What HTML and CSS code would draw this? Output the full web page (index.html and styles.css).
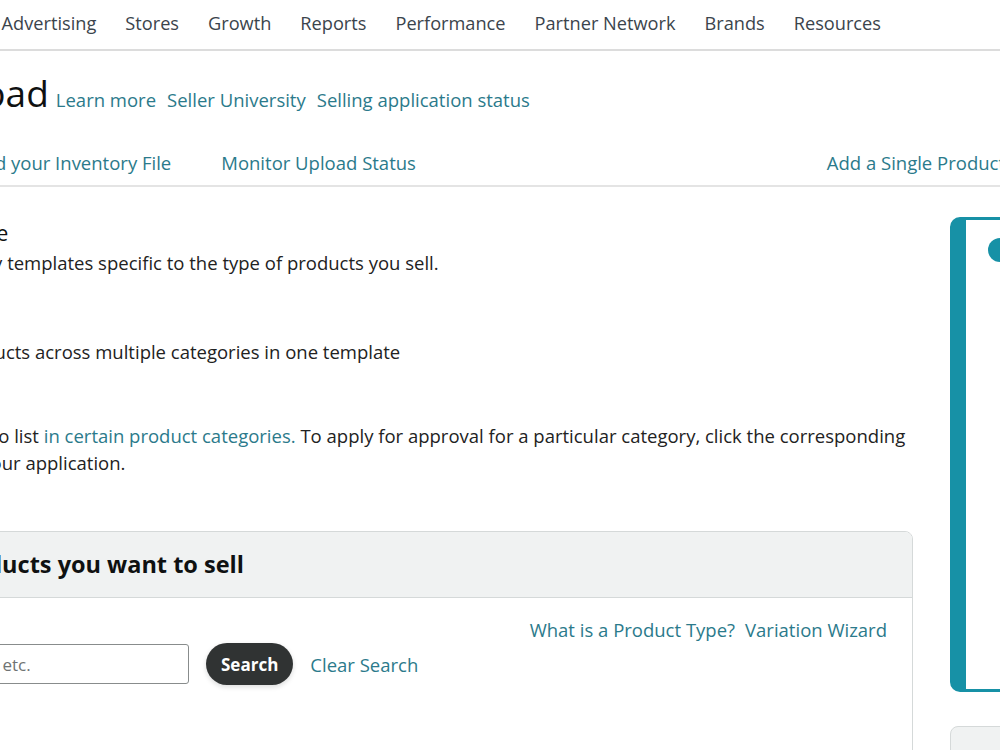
FILE: index.html
```html
<!DOCTYPE html>
<html lang="en">
<head>
  <meta charset="UTF-8" />
  <meta name="viewport" content="width=device-width, initial-scale=1.0" />
  <title>Add Products via Upload</title>
  <link rel="stylesheet" href="styles.css">
</head>
<body>
  <nav class="topnav">
    <a>Catalog</a>
    <a>Inventory</a>
    <a>Pricing</a>
    <a>Orders</a>
    <a>Advertising</a>
    <a>Stores</a>
    <a>Growth</a>
    <a>Reports</a>
    <a>Performance</a>
    <a>Partner Network</a>
    <a>Brands</a>
    <a>Resources</a>
  </nav>

  <div class="title-row">
    <h1>Add Products via Upload</h1>
    <a class="link">Learn more</a>
    <a class="link">Seller University</a>
    <a class="link">Selling application status</a>
  </div>

  <div class="tabs">
    <div class="tabs-left">
      <a class="tab">Download an Inventory File</a>
      <a class="tab">Upload your Inventory File</a>
      <a class="tab">Monitor Upload Status</a>
    </div>
    <a class="tab">Add a Single Product</a>
  </div>

  <div class="layout">
    <main class="main">
      <h2 class="step">Select template type</h2>
      <p class="line l1">Category-specific: Download inventory templates specific to the type of products you sell.</p>
      <p class="line l2">Multi-category: List products across multiple categories in one template</p>
      <p class="line l3">Note: You may need approval to list <a class="link-inline">in certain product categories.</a> To apply for approval for a particular category, click the corresponding</p>
      <p class="line l4">link to begin your application.</p>

      <section class="panel">
        <div class="panel-head">Step 1: Select the products you want to sell</div>
        <div class="panel-body">
          <div class="help-links">
            <a class="link">What is a Product Type?</a>
            <a class="link">Variation Wizard</a>
          </div>
          <div class="search-row">
            <input class="search-input" type="text" placeholder="Enter a product type, e.g. shoes, etc.">
            <button class="search-btn">Search</button>
            <a class="link">Clear Search</a>
          </div>
        </div>
      </section>
    </main>

    <aside class="side">
      <div class="notice">
        <span class="notice-icon"></span>
      </div>
      <div class="side-card"></div>
    </aside>
  </div>
</body>
</html>
```

FILE: styles.css
```css
body {
  margin: 0;
  overflow: hidden;
  background: #fff;
  color: #0f1111;
  font-family: "Open Sans", "Noto Sans", Arial, sans-serif;
  width: 1000px;
  height: 750px;
}

a {
  cursor: pointer;
}

.topnav {
  display: flex;
  align-items: center;
  gap: 29px;
  height: 46px;
  padding-bottom: 3px;
  border-bottom: 2px solid #dcdcdc;
  margin-left: -375px;
  white-space: nowrap;
  font-size: 18.2px;
  color: #3b444c;
}

.title-row {
  display: flex;
  align-items: baseline;
  gap: 11px;
  height: 84px;
  padding-bottom: 4px;
  margin-left: -375px;
  white-space: nowrap;
}

.title-row h1 {
  font-size: 37px;
  font-weight: 400;
  margin: 0 -4px 0 0;
  line-height: 84px;
}

.link {
  color: #2b7a8b;
  font-size: 18.5px;
}

.tabs {
  display: flex;
  justify-content: space-between;
  align-items: center;
  height: 42px;
  padding-top: 2px;
  padding-bottom: 2px;
  border-bottom: 2px solid #e4e4e4;
  margin-left: -341px;
  margin-right: -5px;
  white-space: nowrap;
}

.tabs-left {
  display: flex;
  gap: 50px;
}

.tab {
  color: #2b7a8b;
  font-size: 18.5px;
}

.layout {
  display: flex;
  gap: 37px;
  padding-top: 30px;
}

.main {
  flex: 0 0 auto;
  width: 1213px;
  margin-left: -300px;
}

.step {
  font-size: 21px;
  font-weight: 400;
  margin: 0 0 0 109px;
  line-height: 32px;
}

.line {
  font-size: 18.5px;
  line-height: 27px;
  margin: 0;
  white-space: nowrap;
  color: #222;
}

.l1 { margin-left: -28px; }
.l2 { margin-top: 62px; margin-left: 85px; }
.l3 { margin-top: 57px; margin-left: 32px; }
.l4 { margin-left: 171px; }

.link-inline {
  color: #2b7a8b;
}

.panel {
  margin-top: 55px;
  border: 1px solid #d5d9d9;
  border-radius: 8px;
  overflow: hidden;
}

.panel-head {
  background: #f0f2f2;
  border-bottom: 1px solid #d5d9d9;
  height: 65px;
  line-height: 65px;
  padding-left: 40px;
  font-size: 23.5px;
  font-weight: 700;
  white-space: nowrap;
}

.panel-body {
  padding: 19px 25px 120px 24px;
}

.help-links {
  display: flex;
  justify-content: flex-end;
  gap: 10px;
  line-height: 26px;
}

.search-row {
  display: flex;
  align-items: center;
  gap: 17px;
}

.search-input {
  width: 464px;
  height: 40px;
  box-sizing: border-box;
  border: 1px solid #888c8c;
  border-radius: 3px;
  padding: 0 10px 0 18px;
  font-family: inherit;
  font-size: 17px;
}

.search-input::placeholder {
  color: #6f7373;
}

.search-btn {
  background: #303333;
  color: #fff;
  border: none;
  border-radius: 21px;
  height: 42px;
  padding: 0 15px;
  font-family: inherit;
  font-size: 17px;
  font-weight: 700;
  box-shadow: 0 2px 5px rgba(15, 17, 17, 0.15);
}

.side {
  flex: 0 0 auto;
  width: 300px;
  display: flex;
  flex-direction: column;
  gap: 34px;
}

.notice {
  box-sizing: border-box;
  height: 475px;
  border: 3px solid #1791a6;
  border-left-width: 16px;
  border-radius: 10px;
  padding: 18px 22px;
}

.notice-icon {
  display: block;
  width: 24px;
  height: 24px;
  border-radius: 50%;
  background: #1791a6;
}

.side-card {
  height: 120px;
  background: #f0f2f2;
  border: 1px solid #d5d9d9;
  border-radius: 8px;
}
```
